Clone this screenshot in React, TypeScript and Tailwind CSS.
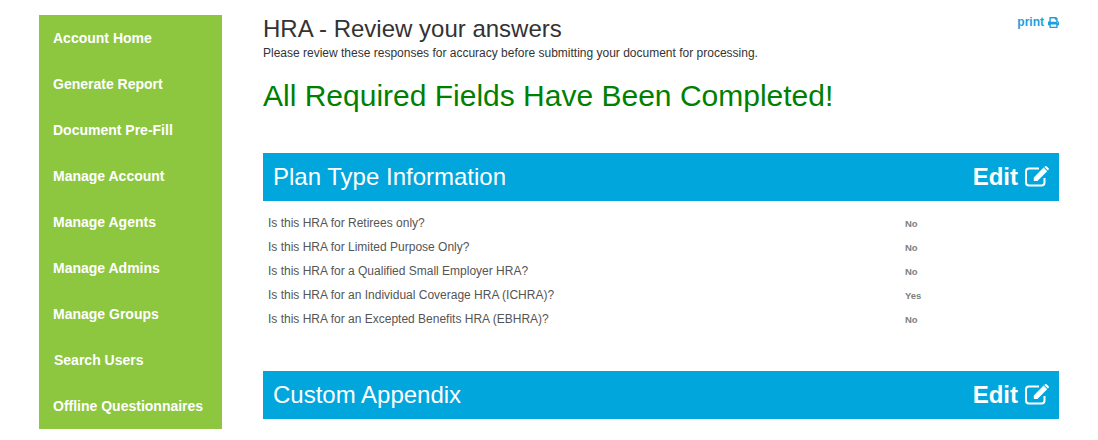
import { FaPrint } from "react-icons/fa";

const navItems = [
  "Account Home",
  "Generate Report",
  "Document Pre-Fill",
  "Manage Account",
  "Manage Agents",
  "Manage Admins",
  "Manage Groups",
  "Search Users",
  "Offline Questionnaires",
];

const questions = [
  { q: "Is this HRA for Retirees only?", a: "No" },
  { q: "Is this HRA for Limited Purpose Only?", a: "No" },
  { q: "Is this HRA for a Qualified Small Employer HRA?", a: "No" },
  { q: "Is this HRA for an Individual Coverage HRA (ICHRA)?", a: "Yes" },
  { q: "Is this HRA for an Excepted Benefits HRA (EBHRA)?", a: "No" },
];

// pencil-in-a-square, the react-icons one has a thin outlined pencil
const EditIcon = () => (
  <svg viewBox="0 0 24 22" className="mb-[3px] h-[22px] w-6" fill="none">
    <path
      d="M19.5 13v4.5a3 3 0 0 1-3 3H4a3 3 0 0 1-3-3V6.5a3 3 0 0 1 3-3h10"
      stroke="currentColor"
      strokeWidth="2"
    />
    <path
      d="M18.6 2.6l3.6 3.6L12.4 16H8.8v-3.6zM19.8 1.4a1.4 1.4 0 0 1 2 0l1.6 1.6a1.4 1.4 0 0 1 0 2l-.5.5-3.6-3.6z"
      fill="currentColor"
    />
  </svg>
);

const SectionBar = ({ title }: { title: string }) => (
  <div className="flex h-12 items-center justify-between bg-[#00a6dc] px-[10px] text-white">
    <h2 className="text-2xl font-normal">{title}</h2>
    <span className="flex items-center gap-[7px] text-2xl font-bold">
      Edit
      <EditIcon />
    </span>
  </div>
);

export default function App() {
  return (
    <div className="flex h-[440px] w-[1098px] items-start overflow-hidden bg-white pl-[39px] pt-[15px] font-['Liberation_Sans',Arial,sans-serif]">
      {/* Sidebar */}
      <nav className="w-[183px] shrink-0 bg-[#8dc63f]">
        {navItems.map((item) => (
          <a
            key={item}
            href="#"
            className={`flex h-[46px] items-center text-sm font-bold text-white ${
              item === "Search Users" ? "pl-[15px]" : "pl-[14px]"
            }`}
          >
            {item}
          </a>
        ))}
      </nav>

      {/* Main */}
      <main className="ml-[41px] w-[796px] shrink-0">
        <div className="flex items-start justify-between">
          <div>
            <h1 className="text-2xl leading-7 font-normal text-[#333]">
              HRA - Review your answers
            </h1>
            <p className="mt-[2px] text-xs leading-4 text-[#333]">
              Please review these responses for accuracy before submitting your document for processing.
            </p>
          </div>
          <a href="#" className="-mt-px flex items-center gap-1 text-xs font-bold text-[#1e9fdc]">
            print
            <FaPrint className="size-[11px]" />
          </a>
        </div>

        <p className="mt-[15px] text-[30px] leading-10 text-[#008000]">
          All Required Fields Have Been Completed!
        </p>

        <div className="mt-[37px]">
          <SectionBar title="Plan Type Information" />
        </div>

        <div className="mt-[11px] pl-[5px]">
          {questions.map((row) => (
            <div key={row.q} className="flex h-6 items-center text-xs text-[#555]">
              <span className="mb-[2px] w-[637px] shrink-0">{row.q}</span>
              <span className="text-[9.5px] font-bold text-[#808080]">{row.a}</span>
            </div>
          ))}
        </div>

        <div className="mt-[39px]">
          <SectionBar title="Custom Appendix" />
        </div>
      </main>
    </div>
  );
}
